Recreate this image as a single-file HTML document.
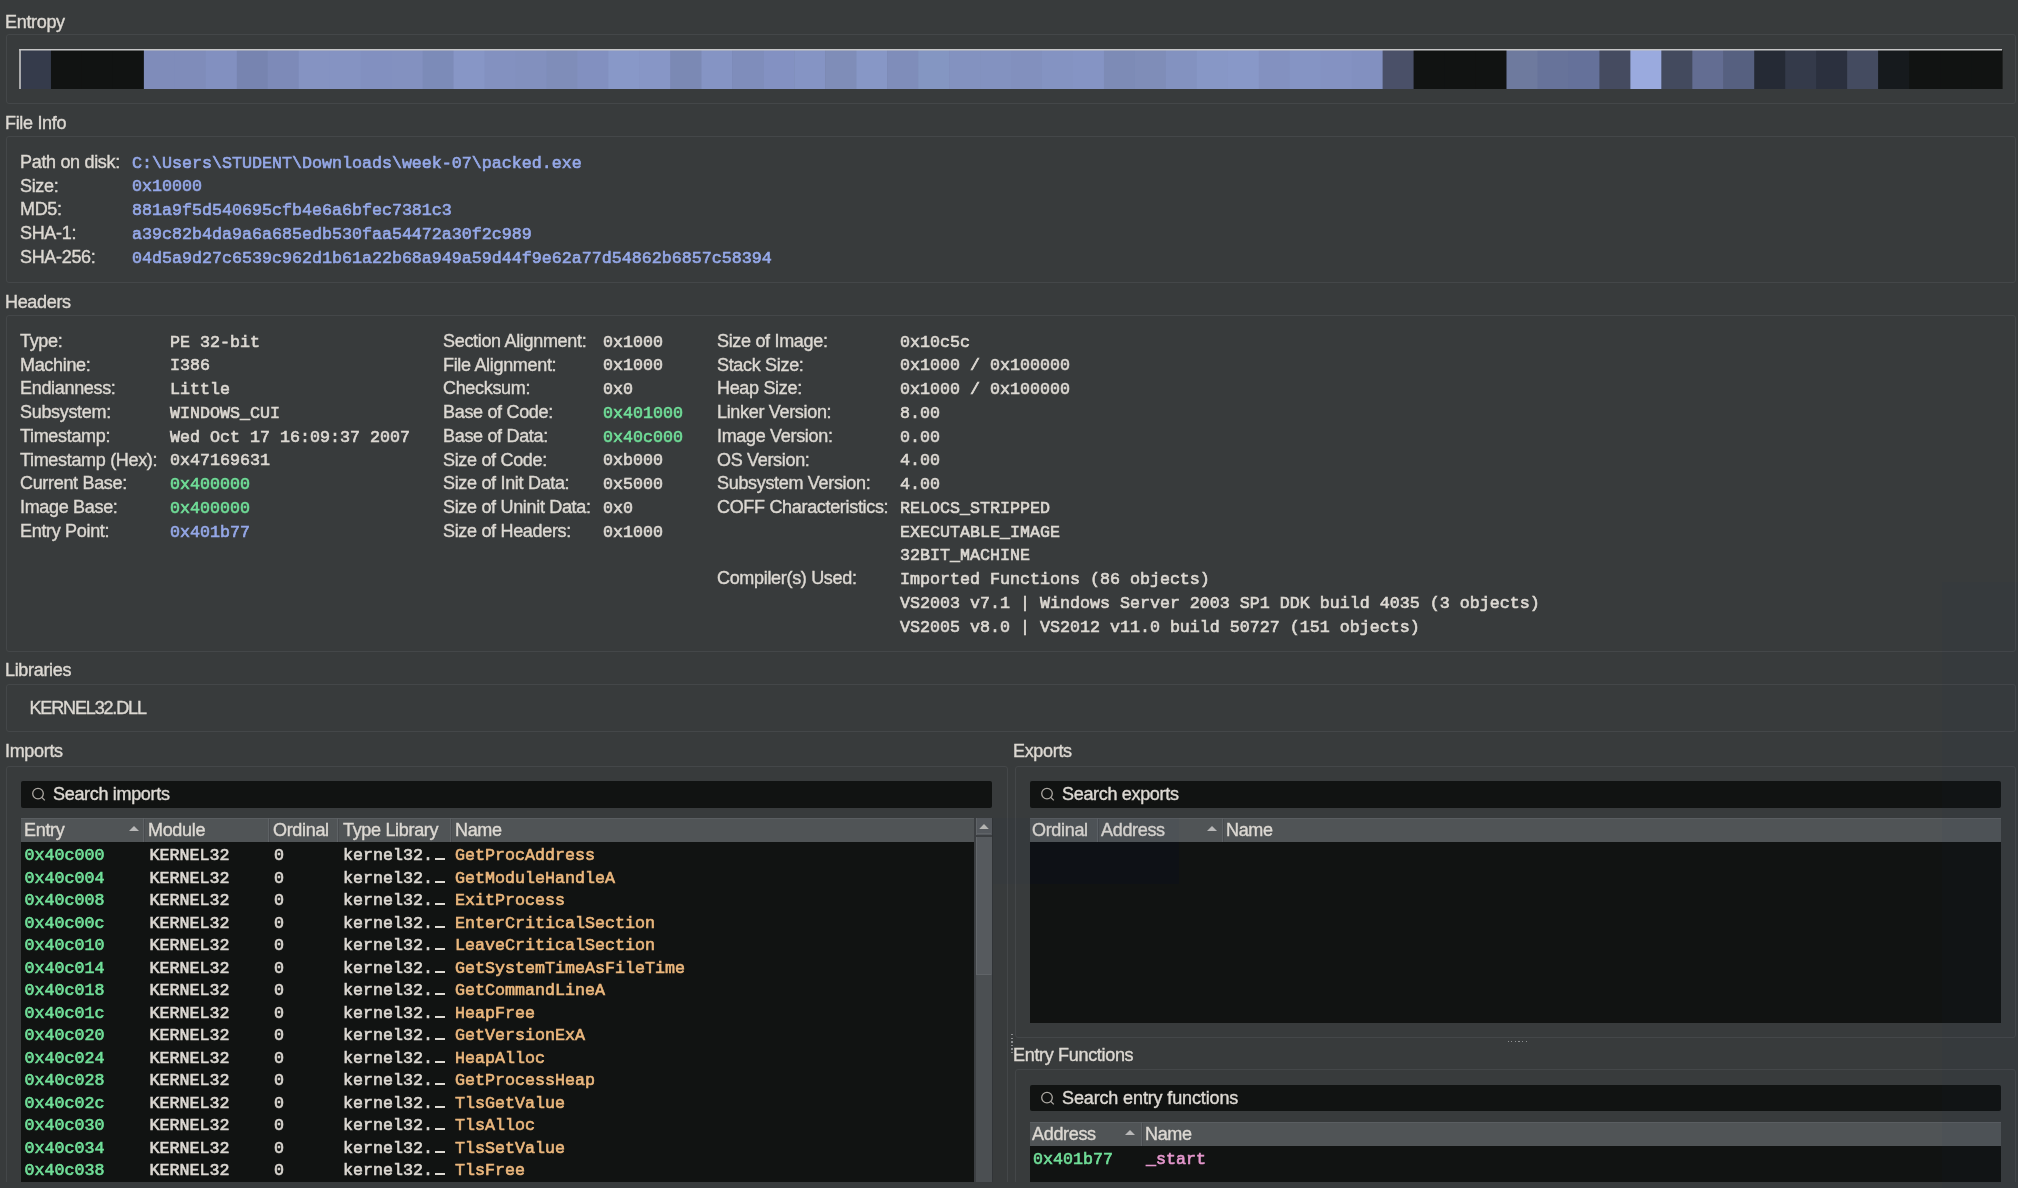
<!DOCTYPE html>
<html><head><meta charset="utf-8"><style>
html,body{margin:0;padding:0}
html,body{background:#383b3c}
body{width:2018px;height:1188px;overflow:hidden;position:relative}
#root{position:absolute;left:0;top:0;width:2018px;height:1188px;background:#383b3c;filter:blur(0.5px)}
.s{position:absolute;white-space:pre;font-family:"Liberation Sans",sans-serif;font-size:18.0px;letter-spacing:-0.32px;line-height:24px;-webkit-text-stroke:0.4px currentColor}
.m{position:absolute;white-space:pre;font-family:"Liberation Mono",monospace;font-size:16.67px;line-height:24px;-webkit-text-stroke:0.65px currentColor}
</style></head><body><div id="root">
<div class="s" style="left:5.00px;top:9.76px;color:#dcd8d2;">Entropy</div>
<div class="s" style="left:5.00px;top:111.26px;color:#dcd8d2;">File Info</div>
<div class="s" style="left:5.00px;top:289.76px;color:#dcd8d2;">Headers</div>
<div class="s" style="left:5.00px;top:658.26px;color:#dcd8d2;">Libraries</div>
<div class="s" style="left:5.00px;top:738.76px;color:#dcd8d2;">Imports</div>
<div class="s" style="left:1013.00px;top:738.76px;color:#dcd8d2;">Exports</div>
<div class="s" style="left:1013.00px;top:1042.76px;color:#dcd8d2;">Entry Functions</div>
<div style="position:absolute;left:6px;top:34px;width:2010px;height:70px;box-sizing:border-box;border:1px solid #444749;border-radius:3px"></div>
<div style="position:absolute;left:6px;top:136px;width:2010px;height:147px;box-sizing:border-box;border:1px solid #444749;border-radius:3px"></div>
<div style="position:absolute;left:6px;top:315px;width:2010px;height:337px;box-sizing:border-box;border:1px solid #444749;border-radius:3px"></div>
<div style="position:absolute;left:6px;top:684px;width:2010px;height:48px;box-sizing:border-box;border:1px solid #444749;border-radius:3px"></div>
<div style="position:absolute;left:6px;top:766px;width:1002px;height:434px;box-sizing:border-box;border:1px solid #444749;border-radius:3px"></div>
<div style="position:absolute;left:1015px;top:766px;width:1001px;height:272px;box-sizing:border-box;border:1px solid #444749;border-radius:3px"></div>
<div style="position:absolute;left:1015px;top:1069px;width:1001px;height:131px;box-sizing:border-box;border:1px solid #444749;border-radius:3px"></div>
<svg style="position:absolute;left:0;top:0" width="2018" height="110"><rect x="20.00" y="50" width="31.57" height="39" fill="#353b4b"/><rect x="50.97" y="50" width="31.57" height="39" fill="#111312"/><rect x="81.94" y="50" width="31.57" height="39" fill="#111312"/><rect x="112.91" y="50" width="31.57" height="39" fill="#111312"/><rect x="143.88" y="50" width="31.57" height="39" fill="#7f8cba"/><rect x="174.84" y="50" width="31.57" height="39" fill="#7f8cba"/><rect x="205.81" y="50" width="31.57" height="39" fill="#8290c0"/><rect x="236.78" y="50" width="31.57" height="39" fill="#7784b0"/><rect x="267.75" y="50" width="31.57" height="39" fill="#7d8ab8"/><rect x="298.72" y="50" width="31.57" height="39" fill="#8593c2"/><rect x="329.69" y="50" width="31.57" height="39" fill="#8593c2"/><rect x="360.66" y="50" width="31.57" height="39" fill="#8290c0"/><rect x="391.62" y="50" width="31.57" height="39" fill="#8391c0"/><rect x="422.59" y="50" width="31.57" height="39" fill="#7c8bb8"/><rect x="453.56" y="50" width="31.57" height="39" fill="#8796c6"/><rect x="484.53" y="50" width="31.57" height="39" fill="#8391c0"/><rect x="515.50" y="50" width="31.57" height="39" fill="#8290be"/><rect x="546.47" y="50" width="31.57" height="39" fill="#7f8db9"/><rect x="577.44" y="50" width="31.57" height="39" fill="#8290c0"/><rect x="608.41" y="50" width="31.57" height="39" fill="#8898c8"/><rect x="639.38" y="50" width="31.57" height="39" fill="#8796c6"/><rect x="670.34" y="50" width="31.57" height="39" fill="#7b89b4"/><rect x="701.31" y="50" width="31.57" height="39" fill="#8594c4"/><rect x="732.28" y="50" width="31.57" height="39" fill="#7f8dbb"/><rect x="763.25" y="50" width="31.57" height="39" fill="#8391c2"/><rect x="794.22" y="50" width="31.57" height="39" fill="#8594c4"/><rect x="825.19" y="50" width="31.57" height="39" fill="#7f8db8"/><rect x="856.16" y="50" width="31.57" height="39" fill="#8797c6"/><rect x="887.12" y="50" width="31.57" height="39" fill="#7f8dba"/><rect x="918.09" y="50" width="31.57" height="39" fill="#8496c2"/><rect x="949.06" y="50" width="31.57" height="39" fill="#8392c0"/><rect x="980.03" y="50" width="31.57" height="39" fill="#8392c0"/><rect x="1011.00" y="50" width="31.57" height="39" fill="#8290be"/><rect x="1041.97" y="50" width="31.57" height="39" fill="#8493c2"/><rect x="1072.94" y="50" width="31.57" height="39" fill="#8594c4"/><rect x="1103.91" y="50" width="31.57" height="39" fill="#7d8bb6"/><rect x="1134.88" y="50" width="31.57" height="39" fill="#7f8db8"/><rect x="1165.84" y="50" width="31.57" height="39" fill="#8392c0"/><rect x="1196.81" y="50" width="31.57" height="39" fill="#8797c6"/><rect x="1227.78" y="50" width="31.57" height="39" fill="#8898c8"/><rect x="1258.75" y="50" width="31.57" height="39" fill="#8391c0"/><rect x="1289.72" y="50" width="31.57" height="39" fill="#8594c4"/><rect x="1320.69" y="50" width="31.57" height="39" fill="#8492c2"/><rect x="1351.66" y="50" width="31.57" height="39" fill="#8290c0"/><rect x="1382.62" y="50" width="31.57" height="39" fill="#4a5068"/><rect x="1413.59" y="50" width="31.57" height="39" fill="#111312"/><rect x="1444.56" y="50" width="31.57" height="39" fill="#111312"/><rect x="1475.53" y="50" width="31.57" height="39" fill="#111312"/><rect x="1506.50" y="50" width="31.57" height="39" fill="#6e7a9e"/><rect x="1537.47" y="50" width="31.57" height="39" fill="#67739a"/><rect x="1568.44" y="50" width="31.57" height="39" fill="#65719a"/><rect x="1599.41" y="50" width="31.57" height="39" fill="#454b60"/><rect x="1630.38" y="50" width="31.57" height="39" fill="#9aaade"/><rect x="1661.34" y="50" width="31.57" height="39" fill="#434a5e"/><rect x="1692.31" y="50" width="31.57" height="39" fill="#636d92"/><rect x="1723.28" y="50" width="31.57" height="39" fill="#566080"/><rect x="1754.25" y="50" width="31.57" height="39" fill="#252a35"/><rect x="1785.22" y="50" width="31.57" height="39" fill="#343a4a"/><rect x="1816.19" y="50" width="31.57" height="39" fill="#2b303e"/><rect x="1847.16" y="50" width="31.57" height="39" fill="#444b60"/><rect x="1878.12" y="50" width="31.57" height="39" fill="#161a1d"/><rect x="1909.09" y="50" width="31.57" height="39" fill="#111312"/><rect x="1940.06" y="50" width="31.57" height="39" fill="#111312"/><rect x="1971.03" y="50" width="31.57" height="39" fill="#111312"/><rect x="19.2" y="49" width="1982.8" height="1.5" fill="#c6c6c6"/><rect x="19.2" y="49" width="1.6" height="40" fill="#c6c6c6"/></svg>
<div class="s" style="left:20.00px;top:149.76px;color:#dcd8d2;">Path on disk:</div>
<div class="m" style="left:132.00px;top:151.56px;color:#95a8e8;">C:\Users\STUDENT\Downloads\week-07\packed.exe</div>
<div class="s" style="left:20.00px;top:173.51px;color:#dcd8d2;">Size:</div>
<div class="m" style="left:132.00px;top:175.31px;color:#95a8e8;">0x10000</div>
<div class="s" style="left:20.00px;top:197.26px;color:#dcd8d2;">MD5:</div>
<div class="m" style="left:132.00px;top:199.06px;color:#95a8e8;">881a9f5d540695cfb4e6a6bfec7381c3</div>
<div class="s" style="left:20.00px;top:221.01px;color:#dcd8d2;">SHA-1:</div>
<div class="m" style="left:132.00px;top:222.81px;color:#95a8e8;">a39c82b4da9a6a685edb530faa54472a30f2c989</div>
<div class="s" style="left:20.00px;top:244.76px;color:#dcd8d2;">SHA-256:</div>
<div class="m" style="left:132.00px;top:246.56px;color:#95a8e8;">04d5a9d27c6539c962d1b61a22b68a949a59d44f9e62a77d54862b6857c58394</div>
<div class="s" style="left:20.00px;top:328.76px;color:#dcd8d2;">Type:</div>
<div class="m" style="left:170.00px;top:330.56px;color:#dcd8d2;">PE 32-bit</div>
<div class="s" style="left:20.00px;top:352.51px;color:#dcd8d2;">Machine:</div>
<div class="m" style="left:170.00px;top:354.31px;color:#dcd8d2;">I386</div>
<div class="s" style="left:20.00px;top:376.26px;color:#dcd8d2;">Endianness:</div>
<div class="m" style="left:170.00px;top:378.06px;color:#dcd8d2;">Little</div>
<div class="s" style="left:20.00px;top:400.01px;color:#dcd8d2;">Subsystem:</div>
<div class="m" style="left:170.00px;top:401.81px;color:#dcd8d2;">WINDOWS_CUI</div>
<div class="s" style="left:20.00px;top:423.76px;color:#dcd8d2;">Timestamp:</div>
<div class="m" style="left:170.00px;top:425.56px;color:#dcd8d2;">Wed Oct 17 16:09:37 2007</div>
<div class="s" style="left:20.00px;top:447.51px;color:#dcd8d2;">Timestamp (Hex):</div>
<div class="m" style="left:170.00px;top:449.31px;color:#dcd8d2;">0x47169631</div>
<div class="s" style="left:20.00px;top:471.26px;color:#dcd8d2;">Current Base:</div>
<div class="m" style="left:170.00px;top:473.06px;color:#70de98;">0x400000</div>
<div class="s" style="left:20.00px;top:495.01px;color:#dcd8d2;">Image Base:</div>
<div class="m" style="left:170.00px;top:496.81px;color:#70de98;">0x400000</div>
<div class="s" style="left:20.00px;top:518.76px;color:#dcd8d2;">Entry Point:</div>
<div class="m" style="left:170.00px;top:520.56px;color:#95a8e8;">0x401b77</div>
<div class="s" style="left:443.00px;top:328.76px;color:#dcd8d2;">Section Alignment:</div>
<div class="m" style="left:603.00px;top:330.56px;color:#dcd8d2;">0x1000</div>
<div class="s" style="left:443.00px;top:352.51px;color:#dcd8d2;">File Alignment:</div>
<div class="m" style="left:603.00px;top:354.31px;color:#dcd8d2;">0x1000</div>
<div class="s" style="left:443.00px;top:376.26px;color:#dcd8d2;">Checksum:</div>
<div class="m" style="left:603.00px;top:378.06px;color:#dcd8d2;">0x0</div>
<div class="s" style="left:443.00px;top:400.01px;color:#dcd8d2;">Base of Code:</div>
<div class="m" style="left:603.00px;top:401.81px;color:#70de98;">0x401000</div>
<div class="s" style="left:443.00px;top:423.76px;color:#dcd8d2;">Base of Data:</div>
<div class="m" style="left:603.00px;top:425.56px;color:#70de98;">0x40c000</div>
<div class="s" style="left:443.00px;top:447.51px;color:#dcd8d2;">Size of Code:</div>
<div class="m" style="left:603.00px;top:449.31px;color:#dcd8d2;">0xb000</div>
<div class="s" style="left:443.00px;top:471.26px;color:#dcd8d2;">Size of Init Data:</div>
<div class="m" style="left:603.00px;top:473.06px;color:#dcd8d2;">0x5000</div>
<div class="s" style="left:443.00px;top:495.01px;color:#dcd8d2;">Size of Uninit Data:</div>
<div class="m" style="left:603.00px;top:496.81px;color:#dcd8d2;">0x0</div>
<div class="s" style="left:443.00px;top:518.76px;color:#dcd8d2;">Size of Headers:</div>
<div class="m" style="left:603.00px;top:520.56px;color:#dcd8d2;">0x1000</div>
<div class="s" style="left:717.00px;top:328.76px;color:#dcd8d2;">Size of Image:</div>
<div class="m" style="left:900.00px;top:330.56px;color:#dcd8d2;">0x10c5c</div>
<div class="s" style="left:717.00px;top:352.51px;color:#dcd8d2;">Stack Size:</div>
<div class="m" style="left:900.00px;top:354.31px;color:#dcd8d2;">0x1000 / 0x100000</div>
<div class="s" style="left:717.00px;top:376.26px;color:#dcd8d2;">Heap Size:</div>
<div class="m" style="left:900.00px;top:378.06px;color:#dcd8d2;">0x1000 / 0x100000</div>
<div class="s" style="left:717.00px;top:400.01px;color:#dcd8d2;">Linker Version:</div>
<div class="m" style="left:900.00px;top:401.81px;color:#dcd8d2;">8.00</div>
<div class="s" style="left:717.00px;top:423.76px;color:#dcd8d2;">Image Version:</div>
<div class="m" style="left:900.00px;top:425.56px;color:#dcd8d2;">0.00</div>
<div class="s" style="left:717.00px;top:447.51px;color:#dcd8d2;">OS Version:</div>
<div class="m" style="left:900.00px;top:449.31px;color:#dcd8d2;">4.00</div>
<div class="s" style="left:717.00px;top:471.26px;color:#dcd8d2;">Subsystem Version:</div>
<div class="m" style="left:900.00px;top:473.06px;color:#dcd8d2;">4.00</div>
<div class="s" style="left:717.00px;top:495.01px;color:#dcd8d2;">COFF Characteristics:</div>
<div class="m" style="left:900.00px;top:496.81px;color:#dcd8d2;">RELOCS_STRIPPED</div>
<div class="m" style="left:900.00px;top:520.56px;color:#dcd8d2;">EXECUTABLE_IMAGE</div>
<div class="m" style="left:900.00px;top:544.31px;color:#dcd8d2;">32BIT_MACHINE</div>
<div class="s" style="left:717.00px;top:566.26px;color:#dcd8d2;">Compiler(s) Used:</div>
<div class="m" style="left:900.00px;top:568.06px;color:#dcd8d2;">Imported Functions (86 objects)</div>
<div class="m" style="left:900.00px;top:591.81px;color:#dcd8d2;">VS2003 v7.1 | Windows Server 2003 SP1 DDK build 4035 (3 objects)</div>
<div class="m" style="left:900.00px;top:615.56px;color:#dcd8d2;">VS2005 v8.0 | VS2012 v11.0 build 50727 (151 objects)</div>
<div class="s" style="left:29.50px;top:695.76px;color:#dcd8d2;letter-spacing:-1.15px">KERNEL32.DLL</div>
<div style="position:absolute;left:21px;top:781px;width:971px;height:27px;background:#111312;border-radius:2px"></div>
<svg style="position:absolute;left:28.6px;top:785.0px" width="18" height="18"><circle cx="9" cy="8.6" r="5.3" fill="none" stroke="#aca8a2" stroke-width="1.3"/><line x1="12.8" y1="12.4" x2="15.8" y2="15.4" stroke="#aca8a2" stroke-width="1.3"/></svg>
<div class="s" style="left:53.00px;top:782.26px;color:#dcd8d2;">Search imports</div>
<div style="position:absolute;left:1030px;top:781px;width:971px;height:27px;background:#111312;border-radius:2px"></div>
<svg style="position:absolute;left:1037.6px;top:785.0px" width="18" height="18"><circle cx="9" cy="8.6" r="5.3" fill="none" stroke="#aca8a2" stroke-width="1.3"/><line x1="12.8" y1="12.4" x2="15.8" y2="15.4" stroke="#aca8a2" stroke-width="1.3"/></svg>
<div class="s" style="left:1062.00px;top:782.26px;color:#dcd8d2;">Search exports</div>
<div style="position:absolute;left:1030px;top:1085px;width:971px;height:26px;background:#111312;border-radius:2px"></div>
<svg style="position:absolute;left:1037.6px;top:1088.5px" width="18" height="18"><circle cx="9" cy="8.6" r="5.3" fill="none" stroke="#aca8a2" stroke-width="1.3"/><line x1="12.8" y1="12.4" x2="15.8" y2="15.4" stroke="#aca8a2" stroke-width="1.3"/></svg>
<div class="s" style="left:1062.00px;top:1085.76px;color:#dcd8d2;letter-spacing:-0.13px">Search entry functions</div>
<div style="position:absolute;left:21px;top:818px;width:954px;height:24px;background:#505456"></div>
<div style="position:absolute;left:21px;top:818px;width:954px;height:1px;background:#5a5e61"></div>
<div style="position:absolute;left:143px;top:818px;width:1px;height:24px;background:#5e6265"></div>
<div style="position:absolute;left:144px;top:819px;width:1px;height:23px;background:#484b4e"></div>
<div style="position:absolute;left:268px;top:818px;width:1px;height:24px;background:#5e6265"></div>
<div style="position:absolute;left:269px;top:819px;width:1px;height:23px;background:#484b4e"></div>
<div style="position:absolute;left:337px;top:818px;width:1px;height:24px;background:#5e6265"></div>
<div style="position:absolute;left:338px;top:819px;width:1px;height:23px;background:#484b4e"></div>
<div style="position:absolute;left:450px;top:818px;width:1px;height:24px;background:#5e6265"></div>
<div style="position:absolute;left:451px;top:819px;width:1px;height:23px;background:#484b4e"></div>
<div class="s" style="left:24.00px;top:818.26px;color:#dcd8d2;">Entry</div>
<div class="s" style="left:148.00px;top:818.26px;color:#dcd8d2;">Module</div>
<div class="s" style="left:273.00px;top:818.26px;color:#dcd8d2;">Ordinal</div>
<div class="s" style="left:343.00px;top:818.26px;color:#dcd8d2;">Type Library</div>
<div class="s" style="left:455.00px;top:818.26px;color:#dcd8d2;">Name</div>
<svg style="position:absolute;left:128px;top:824.0px" width="12" height="8"><polygon points="1,7 6,2 11,7" fill="#b8b8b8"/></svg>
<div style="position:absolute;left:21px;top:842px;width:954px;height:340px;background:#111312"></div>
<div class="m" style="left:24.50px;top:844.06px;color:#70de98;">0x40c000</div>
<div class="m" style="left:149.50px;top:844.06px;color:#dcd8d2;">KERNEL32</div>
<div class="m" style="left:274.00px;top:844.06px;color:#dcd8d2;">0</div>
<div class="m" style="left:343.00px;top:844.06px;color:#dcd8d2;">kernel32.</div>
<div style="position:absolute;left:434.6px;top:858.1px;width:10.199999999999989px;height:2.3999999999999773px;background:#dcd8d2"></div>
<div class="m" style="left:455.00px;top:844.06px;color:#ebb77d;">GetProcAddress</div>
<div class="m" style="left:24.50px;top:866.56px;color:#70de98;">0x40c004</div>
<div class="m" style="left:149.50px;top:866.56px;color:#dcd8d2;">KERNEL32</div>
<div class="m" style="left:274.00px;top:866.56px;color:#dcd8d2;">0</div>
<div class="m" style="left:343.00px;top:866.56px;color:#dcd8d2;">kernel32.</div>
<div style="position:absolute;left:434.6px;top:880.6px;width:10.199999999999989px;height:2.3999999999999773px;background:#dcd8d2"></div>
<div class="m" style="left:455.00px;top:866.56px;color:#ebb77d;">GetModuleHandleA</div>
<div class="m" style="left:24.50px;top:889.06px;color:#70de98;">0x40c008</div>
<div class="m" style="left:149.50px;top:889.06px;color:#dcd8d2;">KERNEL32</div>
<div class="m" style="left:274.00px;top:889.06px;color:#dcd8d2;">0</div>
<div class="m" style="left:343.00px;top:889.06px;color:#dcd8d2;">kernel32.</div>
<div style="position:absolute;left:434.6px;top:903.1px;width:10.199999999999989px;height:2.3999999999999773px;background:#dcd8d2"></div>
<div class="m" style="left:455.00px;top:889.06px;color:#ebb77d;">ExitProcess</div>
<div class="m" style="left:24.50px;top:911.56px;color:#70de98;">0x40c00c</div>
<div class="m" style="left:149.50px;top:911.56px;color:#dcd8d2;">KERNEL32</div>
<div class="m" style="left:274.00px;top:911.56px;color:#dcd8d2;">0</div>
<div class="m" style="left:343.00px;top:911.56px;color:#dcd8d2;">kernel32.</div>
<div style="position:absolute;left:434.6px;top:925.6px;width:10.199999999999989px;height:2.3999999999999773px;background:#dcd8d2"></div>
<div class="m" style="left:455.00px;top:911.56px;color:#ebb77d;">EnterCriticalSection</div>
<div class="m" style="left:24.50px;top:934.06px;color:#70de98;">0x40c010</div>
<div class="m" style="left:149.50px;top:934.06px;color:#dcd8d2;">KERNEL32</div>
<div class="m" style="left:274.00px;top:934.06px;color:#dcd8d2;">0</div>
<div class="m" style="left:343.00px;top:934.06px;color:#dcd8d2;">kernel32.</div>
<div style="position:absolute;left:434.6px;top:948.1px;width:10.199999999999989px;height:2.3999999999999773px;background:#dcd8d2"></div>
<div class="m" style="left:455.00px;top:934.06px;color:#ebb77d;">LeaveCriticalSection</div>
<div class="m" style="left:24.50px;top:956.56px;color:#70de98;">0x40c014</div>
<div class="m" style="left:149.50px;top:956.56px;color:#dcd8d2;">KERNEL32</div>
<div class="m" style="left:274.00px;top:956.56px;color:#dcd8d2;">0</div>
<div class="m" style="left:343.00px;top:956.56px;color:#dcd8d2;">kernel32.</div>
<div style="position:absolute;left:434.6px;top:970.6px;width:10.199999999999989px;height:2.3999999999999773px;background:#dcd8d2"></div>
<div class="m" style="left:455.00px;top:956.56px;color:#ebb77d;">GetSystemTimeAsFileTime</div>
<div class="m" style="left:24.50px;top:979.06px;color:#70de98;">0x40c018</div>
<div class="m" style="left:149.50px;top:979.06px;color:#dcd8d2;">KERNEL32</div>
<div class="m" style="left:274.00px;top:979.06px;color:#dcd8d2;">0</div>
<div class="m" style="left:343.00px;top:979.06px;color:#dcd8d2;">kernel32.</div>
<div style="position:absolute;left:434.6px;top:993.1px;width:10.199999999999989px;height:2.3999999999999773px;background:#dcd8d2"></div>
<div class="m" style="left:455.00px;top:979.06px;color:#ebb77d;">GetCommandLineA</div>
<div class="m" style="left:24.50px;top:1001.56px;color:#70de98;">0x40c01c</div>
<div class="m" style="left:149.50px;top:1001.56px;color:#dcd8d2;">KERNEL32</div>
<div class="m" style="left:274.00px;top:1001.56px;color:#dcd8d2;">0</div>
<div class="m" style="left:343.00px;top:1001.56px;color:#dcd8d2;">kernel32.</div>
<div style="position:absolute;left:434.6px;top:1015.6px;width:10.199999999999989px;height:2.3999999999999773px;background:#dcd8d2"></div>
<div class="m" style="left:455.00px;top:1001.56px;color:#ebb77d;">HeapFree</div>
<div class="m" style="left:24.50px;top:1024.06px;color:#70de98;">0x40c020</div>
<div class="m" style="left:149.50px;top:1024.06px;color:#dcd8d2;">KERNEL32</div>
<div class="m" style="left:274.00px;top:1024.06px;color:#dcd8d2;">0</div>
<div class="m" style="left:343.00px;top:1024.06px;color:#dcd8d2;">kernel32.</div>
<div style="position:absolute;left:434.6px;top:1038.1px;width:10.199999999999989px;height:2.400000000000091px;background:#dcd8d2"></div>
<div class="m" style="left:455.00px;top:1024.06px;color:#ebb77d;">GetVersionExA</div>
<div class="m" style="left:24.50px;top:1046.56px;color:#70de98;">0x40c024</div>
<div class="m" style="left:149.50px;top:1046.56px;color:#dcd8d2;">KERNEL32</div>
<div class="m" style="left:274.00px;top:1046.56px;color:#dcd8d2;">0</div>
<div class="m" style="left:343.00px;top:1046.56px;color:#dcd8d2;">kernel32.</div>
<div style="position:absolute;left:434.6px;top:1060.6px;width:10.199999999999989px;height:2.400000000000091px;background:#dcd8d2"></div>
<div class="m" style="left:455.00px;top:1046.56px;color:#ebb77d;">HeapAlloc</div>
<div class="m" style="left:24.50px;top:1069.06px;color:#70de98;">0x40c028</div>
<div class="m" style="left:149.50px;top:1069.06px;color:#dcd8d2;">KERNEL32</div>
<div class="m" style="left:274.00px;top:1069.06px;color:#dcd8d2;">0</div>
<div class="m" style="left:343.00px;top:1069.06px;color:#dcd8d2;">kernel32.</div>
<div style="position:absolute;left:434.6px;top:1083.1px;width:10.199999999999989px;height:2.400000000000091px;background:#dcd8d2"></div>
<div class="m" style="left:455.00px;top:1069.06px;color:#ebb77d;">GetProcessHeap</div>
<div class="m" style="left:24.50px;top:1091.56px;color:#70de98;">0x40c02c</div>
<div class="m" style="left:149.50px;top:1091.56px;color:#dcd8d2;">KERNEL32</div>
<div class="m" style="left:274.00px;top:1091.56px;color:#dcd8d2;">0</div>
<div class="m" style="left:343.00px;top:1091.56px;color:#dcd8d2;">kernel32.</div>
<div style="position:absolute;left:434.6px;top:1105.6px;width:10.199999999999989px;height:2.400000000000091px;background:#dcd8d2"></div>
<div class="m" style="left:455.00px;top:1091.56px;color:#ebb77d;">TlsGetValue</div>
<div class="m" style="left:24.50px;top:1114.06px;color:#70de98;">0x40c030</div>
<div class="m" style="left:149.50px;top:1114.06px;color:#dcd8d2;">KERNEL32</div>
<div class="m" style="left:274.00px;top:1114.06px;color:#dcd8d2;">0</div>
<div class="m" style="left:343.00px;top:1114.06px;color:#dcd8d2;">kernel32.</div>
<div style="position:absolute;left:434.6px;top:1128.1px;width:10.199999999999989px;height:2.400000000000091px;background:#dcd8d2"></div>
<div class="m" style="left:455.00px;top:1114.06px;color:#ebb77d;">TlsAlloc</div>
<div class="m" style="left:24.50px;top:1136.56px;color:#70de98;">0x40c034</div>
<div class="m" style="left:149.50px;top:1136.56px;color:#dcd8d2;">KERNEL32</div>
<div class="m" style="left:274.00px;top:1136.56px;color:#dcd8d2;">0</div>
<div class="m" style="left:343.00px;top:1136.56px;color:#dcd8d2;">kernel32.</div>
<div style="position:absolute;left:434.6px;top:1150.6px;width:10.199999999999989px;height:2.400000000000091px;background:#dcd8d2"></div>
<div class="m" style="left:455.00px;top:1136.56px;color:#ebb77d;">TlsSetValue</div>
<div class="m" style="left:24.50px;top:1159.06px;color:#70de98;">0x40c038</div>
<div class="m" style="left:149.50px;top:1159.06px;color:#dcd8d2;">KERNEL32</div>
<div class="m" style="left:274.00px;top:1159.06px;color:#dcd8d2;">0</div>
<div class="m" style="left:343.00px;top:1159.06px;color:#dcd8d2;">kernel32.</div>
<div style="position:absolute;left:434.6px;top:1173.1px;width:10.199999999999989px;height:2.400000000000091px;background:#dcd8d2"></div>
<div class="m" style="left:455.00px;top:1159.06px;color:#ebb77d;">TlsFree</div>
<div style="position:absolute;left:974px;top:818px;width:19px;height:364px;background:#3c3f42"></div>
<div style="position:absolute;left:976px;top:837px;width:16px;height:345px;background:#4b4f52"></div>
<div style="position:absolute;left:976px;top:818px;width:16px;height:17px;background:#53575c"></div>
<div style="position:absolute;left:976px;top:818px;width:1px;height:17px;background:#606468"></div>
<div style="position:absolute;left:977px;top:833px;width:14px;height:1px;background:#5f6367"></div>
<svg style="position:absolute;left:978px;top:822px" width="12" height="8"><polygon points="1.2,7 6,2 10.8,7" fill="#b4b4b2"/></svg>
<div style="position:absolute;left:976px;top:837px;width:16px;height:138px;background:#565a5e"></div>
<div style="position:absolute;left:976px;top:837px;width:1px;height:138px;background:#63676b"></div>
<div style="position:absolute;left:977px;top:974px;width:14px;height:1px;background:#606468"></div>
<div style="position:absolute;left:992px;top:818px;width:1px;height:364px;background:#313437"></div>
<div style="position:absolute;left:1030px;top:818px;width:971px;height:24px;background:#505456"></div>
<div style="position:absolute;left:1030px;top:818px;width:971px;height:1px;background:#5a5e61"></div>
<div style="position:absolute;left:1097px;top:818px;width:1px;height:24px;background:#5e6265"></div>
<div style="position:absolute;left:1098px;top:819px;width:1px;height:23px;background:#484b4e"></div>
<div style="position:absolute;left:1222px;top:818px;width:1px;height:24px;background:#5e6265"></div>
<div style="position:absolute;left:1223px;top:819px;width:1px;height:23px;background:#484b4e"></div>
<div class="s" style="left:1032.00px;top:818.26px;color:#dcd8d2;">Ordinal</div>
<div class="s" style="left:1101.00px;top:818.26px;color:#dcd8d2;">Address</div>
<div class="s" style="left:1226.00px;top:818.26px;color:#dcd8d2;">Name</div>
<svg style="position:absolute;left:1206px;top:824.0px" width="12" height="8"><polygon points="1,7 6,2 11,7" fill="#b8b8b8"/></svg>
<div style="position:absolute;left:1030px;top:842px;width:971px;height:181px;background:#111312"></div>
<div style="position:absolute;left:1030px;top:842px;width:149px;height:42px;background:#0e1013"></div>
<div style="position:absolute;left:1030px;top:1122px;width:971px;height:24px;background:#505456"></div>
<div style="position:absolute;left:1030px;top:1122px;width:971px;height:1px;background:#5a5e61"></div>
<div style="position:absolute;left:1141px;top:1122px;width:1px;height:24px;background:#5e6265"></div>
<div style="position:absolute;left:1142px;top:1123px;width:1px;height:23px;background:#484b4e"></div>
<div class="s" style="left:1032.00px;top:1122.26px;color:#dcd8d2;">Address</div>
<div class="s" style="left:1145.00px;top:1122.26px;color:#dcd8d2;">Name</div>
<svg style="position:absolute;left:1124px;top:1128.0px" width="12" height="8"><polygon points="1,7 6,2 11,7" fill="#b8b8b8"/></svg>
<div style="position:absolute;left:1030px;top:1146px;width:971px;height:36px;background:#111312"></div>
<div class="m" style="left:1033.00px;top:1147.56px;color:#70de98;">0x401b77</div>
<div class="m" style="left:1146.00px;top:1147.56px;color:#e497cc;">_start</div>
<div style="position:absolute;left:1011px;top:1034.0px;width:1.6000000000000227px;height:1.400000000000091px;background:#8c8e90"></div>
<div style="position:absolute;left:1011px;top:1037.6px;width:1.6000000000000227px;height:1.400000000000091px;background:#8c8e90"></div>
<div style="position:absolute;left:1011px;top:1041.2px;width:1.6000000000000227px;height:1.400000000000091px;background:#8c8e90"></div>
<div style="position:absolute;left:1011px;top:1044.8px;width:1.6000000000000227px;height:1.400000000000091px;background:#8c8e90"></div>
<div style="position:absolute;left:1011px;top:1048.4px;width:1.6000000000000227px;height:1.400000000000091px;background:#8c8e90"></div>
<div style="position:absolute;left:1011px;top:1052.0px;width:1.6000000000000227px;height:1.400000000000091px;background:#8c8e90"></div>
<div style="position:absolute;left:1507.5px;top:1040.5px;width:1.400000000000091px;height:1.5px;background:#8c8e90"></div>
<div style="position:absolute;left:1511.1px;top:1040.5px;width:1.400000000000091px;height:1.5px;background:#8c8e90"></div>
<div style="position:absolute;left:1514.7px;top:1040.5px;width:1.400000000000091px;height:1.5px;background:#8c8e90"></div>
<div style="position:absolute;left:1518.3px;top:1040.5px;width:1.400000000000091px;height:1.5px;background:#8c8e90"></div>
<div style="position:absolute;left:1521.9px;top:1040.5px;width:1.400000000000091px;height:1.5px;background:#8c8e90"></div>
<div style="position:absolute;left:1525.5px;top:1040.5px;width:1.400000000000091px;height:1.5px;background:#8c8e90"></div>
<div style="position:absolute;left:0px;top:1182px;width:2018px;height:6px;background:#383b3c"></div>
<div style="position:absolute;left:1942px;top:582px;width:76px;height:606px;background:rgba(20,35,95,0.045)"></div>
<div style="position:absolute;left:993px;top:818px;width:186px;height:66px;background:rgba(20,35,95,0.045)"></div>
</div></body></html>
